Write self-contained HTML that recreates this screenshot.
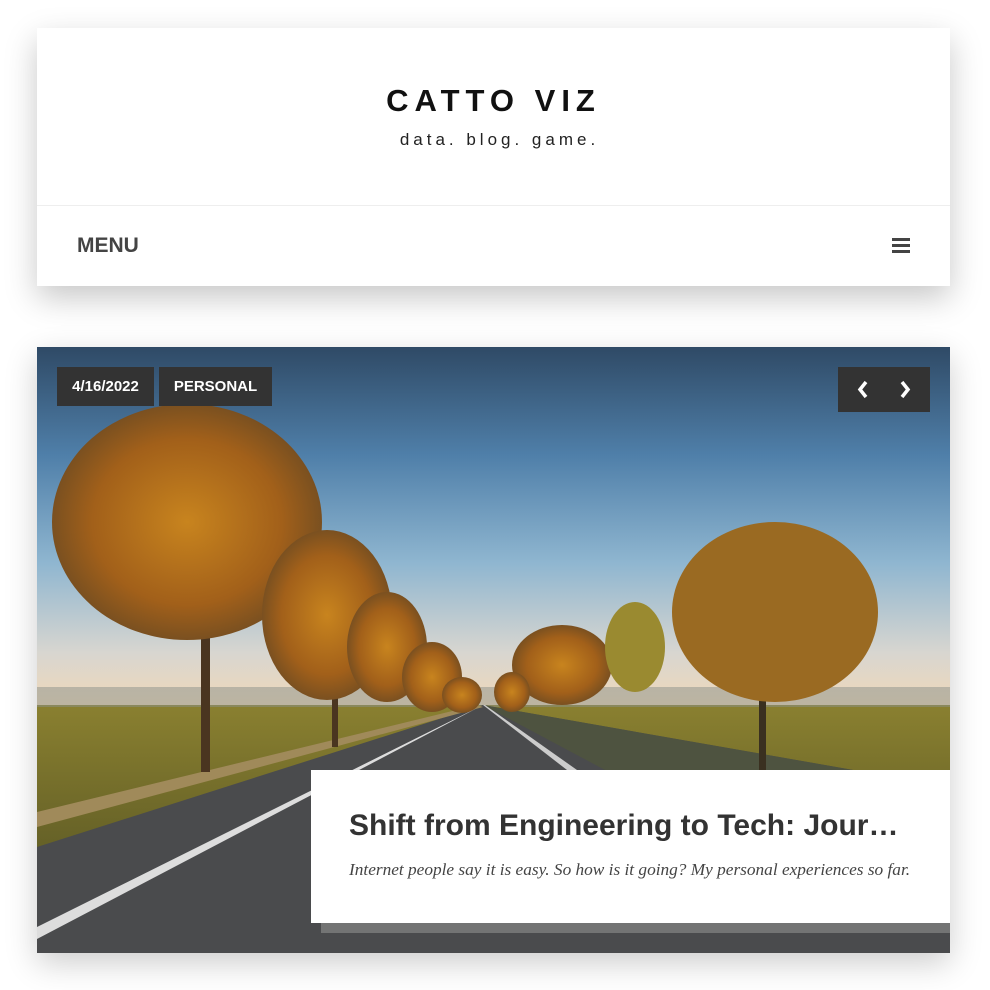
<!DOCTYPE html>
<html><head><style>
body{margin:0;width:990px;height:990px;background:#fff;overflow:hidden;position:relative;font-family:"Liberation Sans",sans-serif}
.hdr{position:absolute;left:37px;top:28px;width:913px;height:258px;background:#fff;box-shadow:0 12px 30px rgba(0,0,0,.22)}
.title{position:absolute;top:55px;left:0;width:100%;text-align:center;font-size:31px;font-weight:bold;letter-spacing:6px;color:#111}
.tag{position:absolute;top:102px;left:6px;width:100%;text-align:center;font-size:17px;letter-spacing:4px;color:#222}
.line{position:absolute;top:177px;left:0;width:100%;height:1px;background:#eee}
.menu{position:absolute;left:40px;top:206px;font-size:21px;font-weight:bold;color:#444}
.burger{position:absolute;left:855px;top:210px;width:18px}
.burger i{display:block;height:3px;background:#444;margin-bottom:3px}
.hero{position:absolute;left:37px;top:347px;width:913px;height:606px;overflow:hidden;box-shadow:0 10px 30px rgba(0,0,0,.2)}
.pill{position:absolute;top:20px;height:39px;background:#333;color:#fff;font-size:15px;font-weight:bold;line-height:39px;text-align:center}
.nav{position:absolute;left:801px;top:20px;width:92px;height:45px;background:#333}
.card{position:absolute;left:274px;top:423px;width:639px;height:153px;background:#fff}
.sh{position:absolute;left:284px;top:576px;width:629px;height:10px;background:rgba(130,130,130,.75)}
.card h2{margin:0;position:absolute;left:38px;top:39px;font-size:30px;color:#333;font-weight:bold}
.card p{margin:0;position:absolute;left:38px;top:90px;font-family:"Liberation Serif",serif;font-style:italic;font-size:17.3px;color:#444}
</style></head><body>
<div class="hdr">
<div class="title">CATTO VIZ</div>
<div class="tag">data. blog. game.</div>
<div class="line"></div>
<div class="menu">MENU</div>
<div class="burger"><i></i><i></i><i></i></div>
</div>
<div class="hero">
<svg width="913" height="606" viewBox="0 0 913 606">
<defs>
<linearGradient id="sky" x1="0" y1="0" x2="0" y2="1">
<stop offset="0" stop-color="#2f4a66"/><stop offset=".3" stop-color="#4f7fa9"/><stop offset=".6" stop-color="#8fb6d0"/><stop offset=".85" stop-color="#d8d6d0"/><stop offset="1" stop-color="#f0d8b8"/></linearGradient>
<linearGradient id="fld" x1="0" y1="0" x2="0" y2="1"><stop offset="0" stop-color="#8a8030"/><stop offset="1" stop-color="#4a4a20"/></linearGradient>
<radialGradient id="tr"><stop offset="0" stop-color="#c8841e"/><stop offset=".7" stop-color="#a2601a"/><stop offset="1" stop-color="#7a5020"/></radialGradient>
</defs>
<rect width="913" height="360" fill="url(#sky)"/>
<rect y="358" width="913" height="248" fill="url(#fld)"/>
<rect y="340" width="913" height="20" fill="#8a8f8a" opacity=".5"/>
<polygon points="446,358 913,440 913,606 0,606 0,500" fill="#4a4b4d"/>
<polygon points="446,358 600,440 913,440" fill="#4e5340"/>
<polygon points="446,358 0,580 0,592" fill="#ddd"/>
<polygon points="446,358 448,358 540,423 530,423" fill="#ccc"/>
<polygon points="0,465 440,358 446,360 0,480" fill="#a08a5a"/>
<rect x="164" y="270" width="9" height="155" fill="#4a3520"/>
<rect x="722" y="300" width="7" height="125" fill="#3a3020"/>
<rect x="295" y="300" width="6" height="100" fill="#4a3520"/>
<ellipse cx="150" cy="175" rx="135" ry="118" fill="url(#tr)"/>
<ellipse cx="290" cy="268" rx="65" ry="85" fill="url(#tr)"/>
<ellipse cx="350" cy="300" rx="40" ry="55" fill="url(#tr)"/>
<ellipse cx="395" cy="330" rx="30" ry="35" fill="url(#tr)"/>
<ellipse cx="425" cy="348" rx="20" ry="18" fill="url(#tr)"/>
<ellipse cx="738" cy="265" rx="103" ry="90" fill="#9a6a22"/>
<ellipse cx="525" cy="318" rx="50" ry="40" fill="url(#tr)"/>
<ellipse cx="598" cy="300" rx="30" ry="45" fill="#9a8a30"/>
<ellipse cx="475" cy="345" rx="18" ry="20" fill="url(#tr)"/>
</svg>
<div class="pill" style="left:20px;width:97px">4/16/2022</div>
<div class="pill" style="left:122px;width:113px">PERSONAL</div>
<div class="nav"><svg width="92" height="45"><path d="M28 15 L22 22.5 L28 30" stroke="#fff" stroke-width="3.5" fill="none"/><path d="M64 15 L70 22.5 L64 30" stroke="#fff" stroke-width="3.5" fill="none"/></svg></div>
<div class="sh"></div>
<div class="card"><h2>Shift from Engineering to Tech: Jour…</h2><p>Internet people say it is easy. So how is it going? My personal experiences so far.</p></div>
</div>
</body></html>
